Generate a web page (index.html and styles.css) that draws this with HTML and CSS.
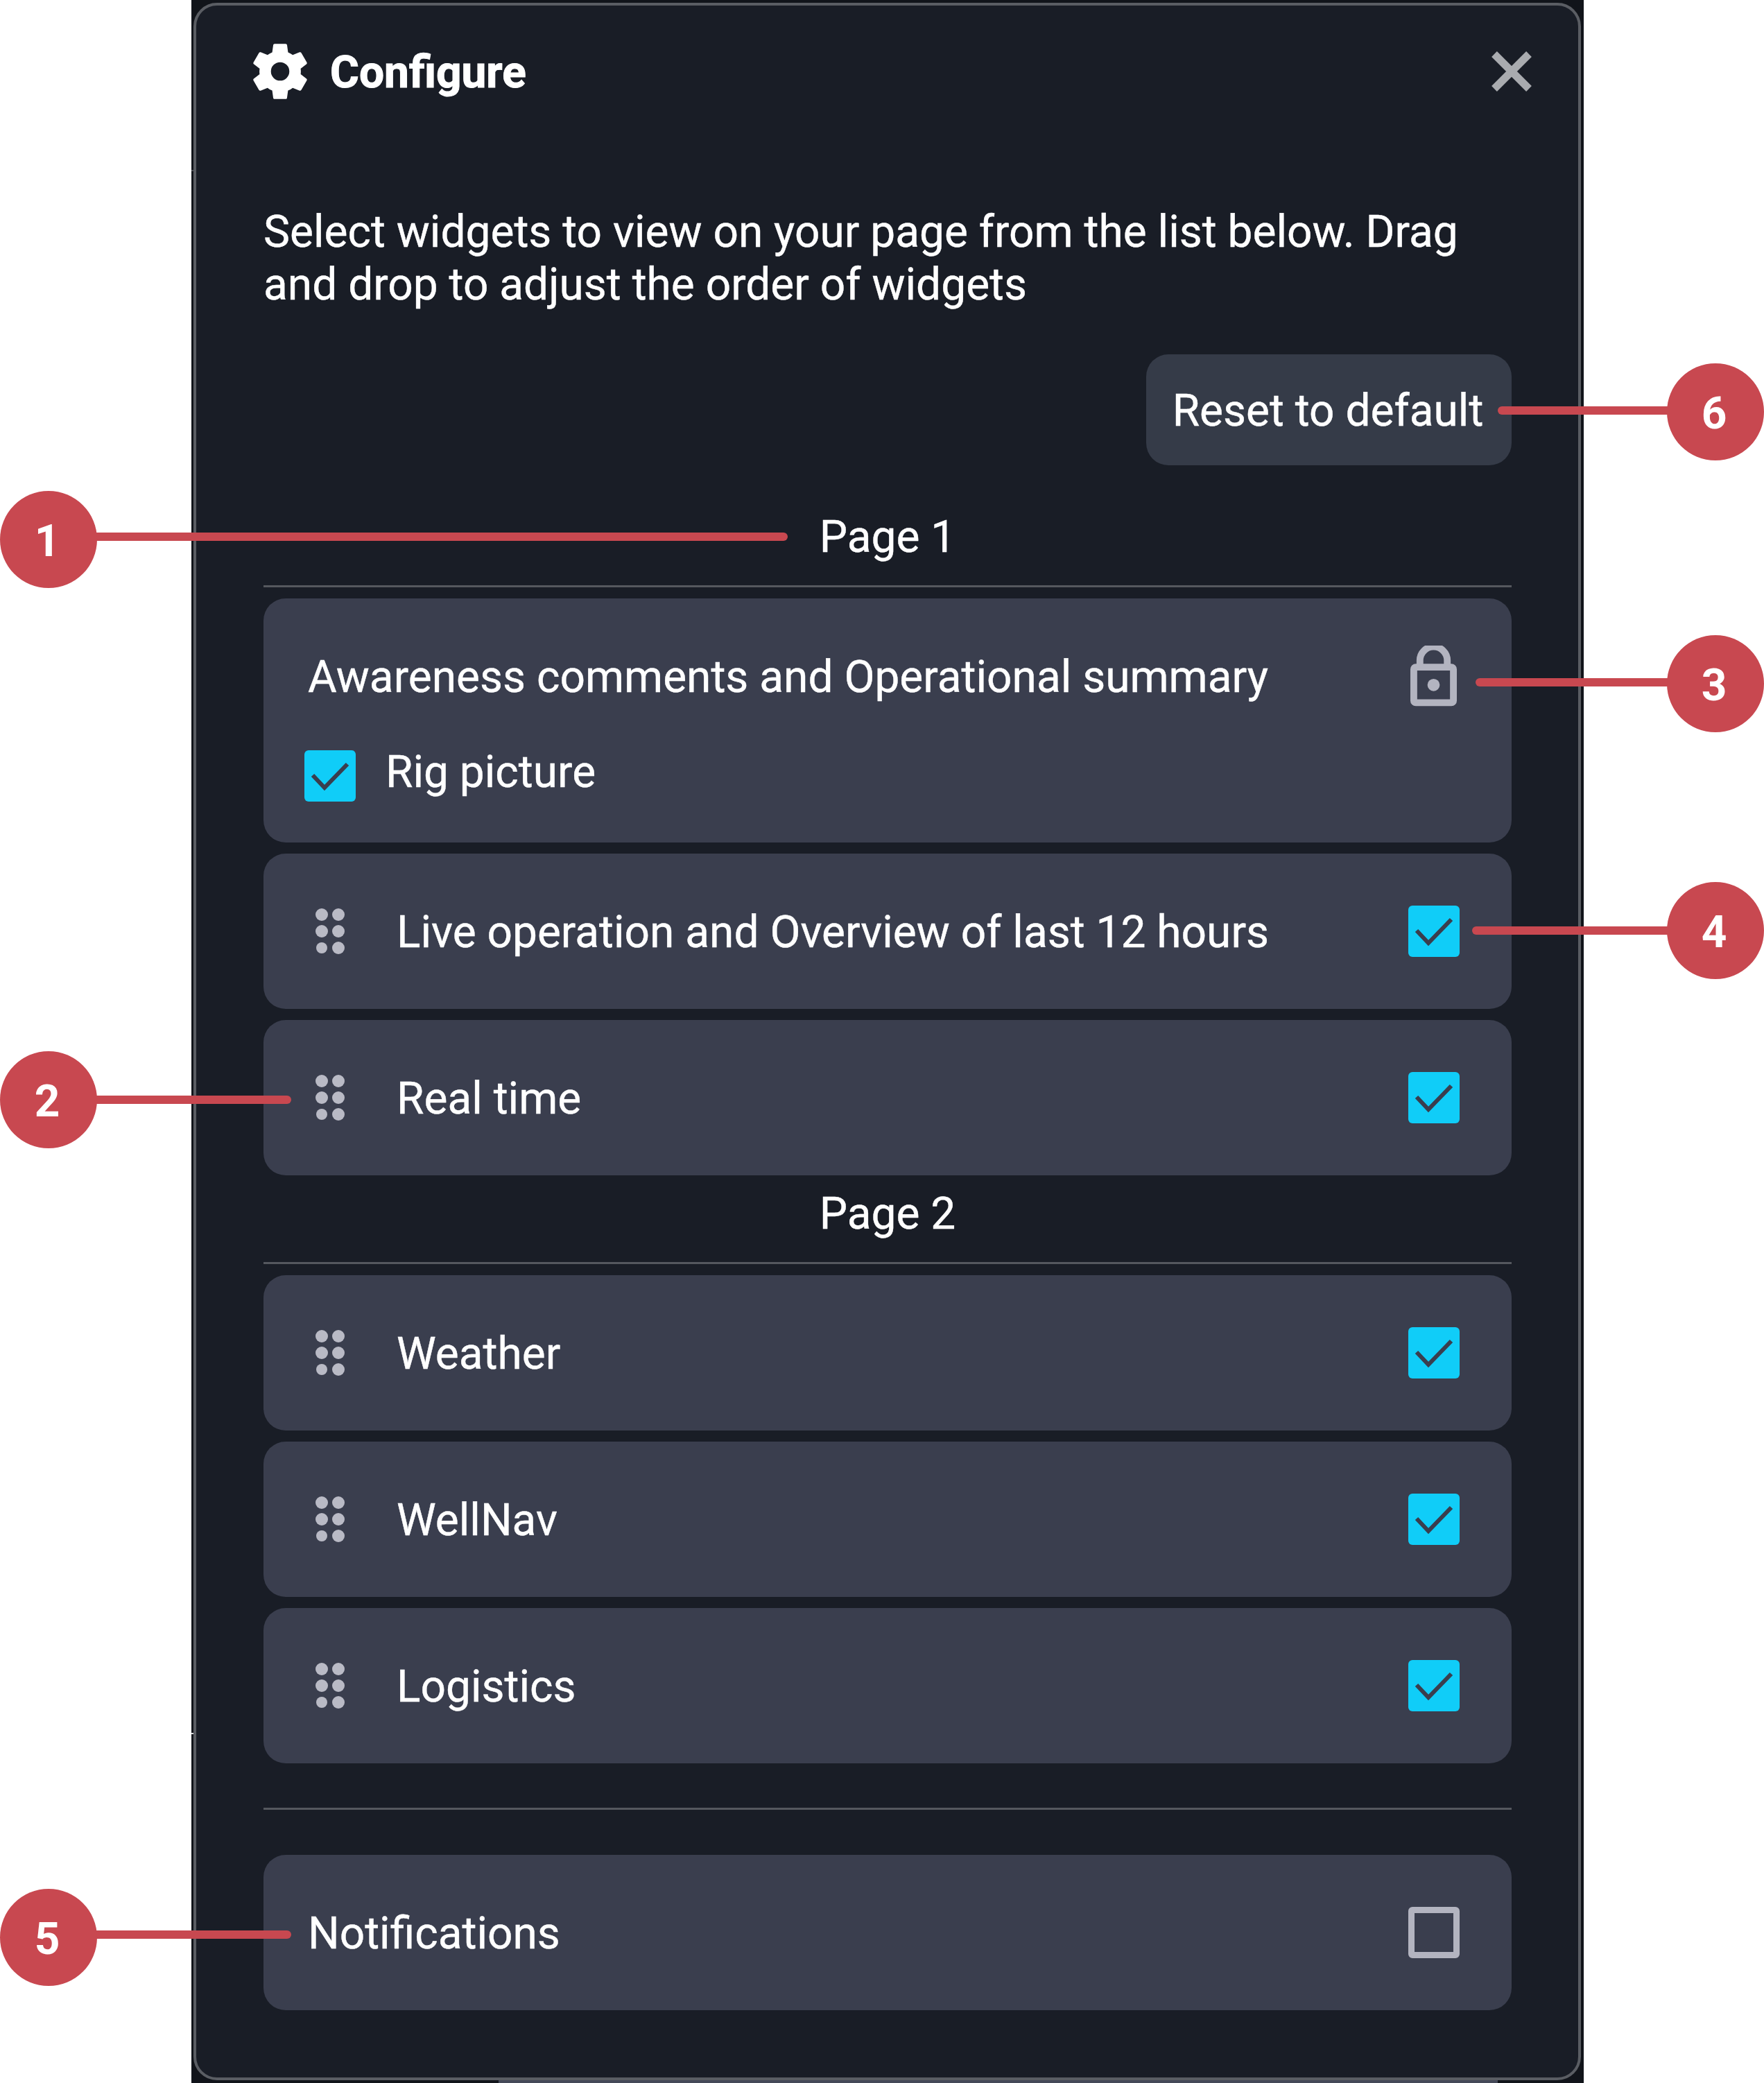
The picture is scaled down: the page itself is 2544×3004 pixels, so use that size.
FILE: index.html
```html
<!DOCTYPE html>
<html lang="en">
<head>
<meta charset="utf-8">
<title>Configure</title>
<link rel="stylesheet" href="styles.css">
</head>
<body>
<main class="stage">
  <div class="backdrop">
    <section class="dialog">
      <header class="dialog-header">
        <svg class="gear" viewBox="2.6 2.6 18.8 18.8"><path fill-rule="evenodd" d="M19.14 12.94c.04-.3.06-.61.06-.94 0-.32-.02-.64-.07-.94l2.03-1.58c.18-.14.23-.41.12-.61l-1.92-3.32c-.12-.22-.37-.29-.59-.22l-2.39.96c-.5-.38-1.03-.7-1.62-.94l-.36-2.54c-.04-.24-.24-.41-.48-.41h-3.84c-.24 0-.43.17-.47.41l-.36 2.54c-.59.24-1.13.57-1.62.94l-2.39-.96c-.22-.08-.47 0-.59.22L2.74 8.87c-.12.21-.08.47.12.61l2.03 1.58c-.05.3-.09.63-.09.94s.02.64.07.94l-2.03 1.58c-.18.14-.23.41-.12.61l1.92 3.32c.12.22.37.29.59.22l2.39-.96c.5.38 1.03.7 1.62.94l.36 2.54c.05.24.24.41.48.41h3.84c.24 0 .44-.17.47-.41l.36-2.54c.59-.24 1.13-.56 1.62-.94l2.39.96c.22.08.47 0 .59-.22l1.92-3.32c.12-.22.07-.47-.12-.61l-2.01-1.58zM12 15.2a3.2 3.2 0 1 0 0-6.4 3.2 3.2 0 0 0 0 6.4z"/></svg>
        <h1 class="dialog-title">Configure</h1>
        <svg class="close" viewBox="0 0 60 60"><path d="M5 5 55 55M55 5 5 55"/></svg>
      </header>
      <p class="intro">Select widgets to view on your page from the list below. Drag and drop to adjust the order of widgets</p>
      <div class="actions"><button class="reset">Reset to default</button></div>

      <h2 class="page-label page-first">Page 1</h2>
      <div class="rows">
        <div class="row row-locked">
          <div class="locked-top">
            <span class="label">Awareness comments and Operational summary</span>
            <svg class="lock" viewBox="0 0 68 88"><path class="lock-line" d="M14 30V21a20 20 0 0 1 40 0V30"/><rect class="lock-line" x="5" y="31" width="58" height="52" rx="3"/><circle class="lock-dot" cx="34" cy="57" r="9"/></svg>
          </div>
          <div class="locked-sub">
            <span class="check"><svg viewBox="0 0 74 74"><path d="M12 36 29 54 62 20"/></svg></span>
            <span class="label">Rig picture</span>
          </div>
        </div>
        <div class="row">
          <svg class="grip" viewBox="0 0 42 66"><circle cx="9" cy="9" r="9"/><circle cx="33" cy="9" r="9"/><circle cx="9" cy="33" r="9"/><circle cx="33" cy="33" r="9"/><circle cx="9" cy="57" r="8"/><circle cx="33" cy="57" r="9"/></svg>
          <span class="label grow">Live operation and Overview of last 12 hours</span>
          <span class="check"><svg viewBox="0 0 74 74"><path d="M12 36 29 54 62 20"/></svg></span>
        </div>
        <div class="row">
          <svg class="grip" viewBox="0 0 42 66"><circle cx="9" cy="9" r="9"/><circle cx="33" cy="9" r="9"/><circle cx="9" cy="33" r="9"/><circle cx="33" cy="33" r="9"/><circle cx="9" cy="57" r="8"/><circle cx="33" cy="57" r="9"/></svg>
          <span class="label grow">Real time</span>
          <span class="check"><svg viewBox="0 0 74 74"><path d="M12 36 29 54 62 20"/></svg></span>
        </div>
      </div>

      <h2 class="page-label page-next">Page 2</h2>
      <div class="rows">
        <div class="row">
          <svg class="grip" viewBox="0 0 42 66"><circle cx="9" cy="9" r="9"/><circle cx="33" cy="9" r="9"/><circle cx="9" cy="33" r="9"/><circle cx="33" cy="33" r="9"/><circle cx="9" cy="57" r="8"/><circle cx="33" cy="57" r="9"/></svg>
          <span class="label grow">Weather</span>
          <span class="check"><svg viewBox="0 0 74 74"><path d="M12 36 29 54 62 20"/></svg></span>
        </div>
        <div class="row">
          <svg class="grip" viewBox="0 0 42 66"><circle cx="9" cy="9" r="9"/><circle cx="33" cy="9" r="9"/><circle cx="9" cy="33" r="9"/><circle cx="33" cy="33" r="9"/><circle cx="9" cy="57" r="8"/><circle cx="33" cy="57" r="9"/></svg>
          <span class="label grow">WellNav</span>
          <span class="check"><svg viewBox="0 0 74 74"><path d="M12 36 29 54 62 20"/></svg></span>
        </div>
        <div class="row">
          <svg class="grip" viewBox="0 0 42 66"><circle cx="9" cy="9" r="9"/><circle cx="33" cy="9" r="9"/><circle cx="9" cy="33" r="9"/><circle cx="33" cy="33" r="9"/><circle cx="9" cy="57" r="8"/><circle cx="33" cy="57" r="9"/></svg>
          <span class="label grow">Logistics</span>
          <span class="check"><svg viewBox="0 0 74 74"><path d="M12 36 29 54 62 20"/></svg></span>
        </div>
      </div>

      <hr class="divider">
      <div class="row row-plain">
        <span class="label grow">Notifications</span>
        <span class="check-empty"></span>
      </div>
    </section>
    <div class="peek"></div>
    <div class="tick tick-top"></div>
    <div class="tick tick-low"></div>
  </div>

  <div class="callout from-left c1"><span class="leader"></span><span class="badge">1</span></div>
  <div class="callout from-left c2"><span class="leader"></span><span class="badge">2</span></div>
  <div class="callout from-left c5"><span class="leader"></span><span class="badge">5</span></div>
  <div class="callout from-right c3"><span class="leader"></span><span class="badge">3</span></div>
  <div class="callout from-right c4"><span class="leader"></span><span class="badge">4</span></div>
  <div class="callout from-right c6"><span class="leader"></span><span class="badge">6</span></div>
</main>
</body>
</html>
```
FILE: styles.css
```css
* { box-sizing: border-box; }
html, body { margin: 0; padding: 0; background: #fff; }
body { font-family: Roboto, "Liberation Sans", sans-serif; color: #fff; -webkit-text-stroke: 0.4px #fff; }

.stage { position: relative; width: 2544px; height: 3004px; overflow: hidden; }
.backdrop { position: relative; margin-left: 276px; width: 2008px; height: 3004px; padding: 4px 4px 4px 3px; background: #11141a; }
.peek { position: absolute; left: 443px; right: 124px; bottom: 0; height: 4px; background: #444958; }
.tick { position: absolute; left: 0; width: 3px; height: 2px; }
.tick-top { top: 245px; background: #4a4d53; }
.tick-low { top: 2499px; background: #d8d9db; }

.dialog { height: 2996px; padding: 0 96px 0 97px; background: #191d26; border: 4px solid #5a5d63; border-radius: 34px; }

.dialog-header { display: flex; align-items: center; height: 80px; margin-top: 55px; }
.gear { width: 78px; height: 80px; margin-left: -15px; fill: #fff; flex: none; }
.dialog-title { margin: 4px 0 0 33px; flex: 1; font-size: 64px; font-weight: 700; line-height: 80px; -webkit-text-stroke: 1px #fff; }
.close { width: 60px; height: 60px; margin-right: -30px; fill: none; stroke: #a9abaf; stroke-width: 11; flex: none; }

.intro { margin: 0; padding-top: 154px; font-size: 64px; line-height: 76px; }
.actions { display: flex; justify-content: flex-end; margin-top: 62px; }
.reset { width: 527px; height: 160px; padding: 3px 3px 0 0; border: 0; border-radius: 32px; background: #353b48; color: #fff; font: 400 64px/76px Roboto, sans-serif; -webkit-text-stroke: 0.4px #fff; }

.page-label { margin: 0 0 16px; padding: 2px 0 31px; border-bottom: 3px solid #55585e; font-size: 64px; font-weight: 400; line-height: 76px; text-align: center; }
.page-first { margin-top: 64px; }
.page-next { margin-top: 16px; }

.rows { display: flex; flex-direction: column; gap: 16px; }
.row { display: flex; align-items: center; height: 224px; padding: 0 75px 0 75px; border-radius: 32px; background: #3a3e4e; }
.row-plain { padding-left: 64px; }
.row-locked { display: block; height: 352px; padding: 0 75px 0 59px; }
.locked-top { display: flex; align-items: center; justify-content: space-between; height: 138px; padding: 86px 0 0 5px; }
.locked-sub { display: flex; align-items: center; gap: 43px; height: 74px; margin-top: 81px; }
.locked-sub .label { padding-top: 0; margin-top: -11px; }

.label { font-size: 64px; line-height: 76px; padding-top: 4px; }
.row .grow { margin-left: -1px; }
.row-plain .grow { margin-left: 0; }
.grow { flex: 1; }
.grip { width: 42px; height: 66px; margin-right: 76px; fill: #b9bac5; flex: none; }
.lock { width: 67px; height: 88px; margin-right: 4px; flex: none; }
.lock-line { fill: none; stroke: #b3b4c0; stroke-width: 10; }
.lock-dot { fill: #b3b4c0; }

.check { width: 74px; height: 74px; border-radius: 6px; background: #10cdf8; flex: none; }
.check svg { display: block; width: 74px; height: 74px; fill: none; stroke: #3a3e4e; stroke-width: 6; }
.check-empty { width: 74px; height: 74px; border: 9px solid #b3b4c0; border-radius: 6px; flex: none; }

.divider { height: 3px; margin: 64px 0 65px; border: 0; background: #55585e; }

.callout { position: absolute; width: 140px; height: 140px; -webkit-text-stroke: 0; }
.from-left { left: 0; }
.from-right { right: 0; }
.badge { position: absolute; inset: 0; display: flex; align-items: center; justify-content: center; padding: 6px 4px 0 0; border-radius: 50%; background: #c84850; color: #fff; font-size: 64px; font-weight: 700; line-height: 1; }
.leader { position: absolute; top: var(--line-y); height: 12px; width: var(--line-w); background: #c84850; border-radius: 6px; }
.from-left .leader { left: 70px; }
.from-right .leader { right: 70px; }

.c1 { top: 708px; --line-y: 60px; --line-w: 1066px; }
.c2 { top: 1516px; --line-y: 64px; --line-w: 350px; }
.c5 { top: 2724px; --line-y: 60px; --line-w: 350px; }
.c3 { top: 916px; --line-y: 62px; --line-w: 346px; }
.c4 { top: 1272px; --line-y: 64px; --line-w: 351px; }
.c6 { top: 524px; --line-y: 62px; --line-w: 314px; }
```
